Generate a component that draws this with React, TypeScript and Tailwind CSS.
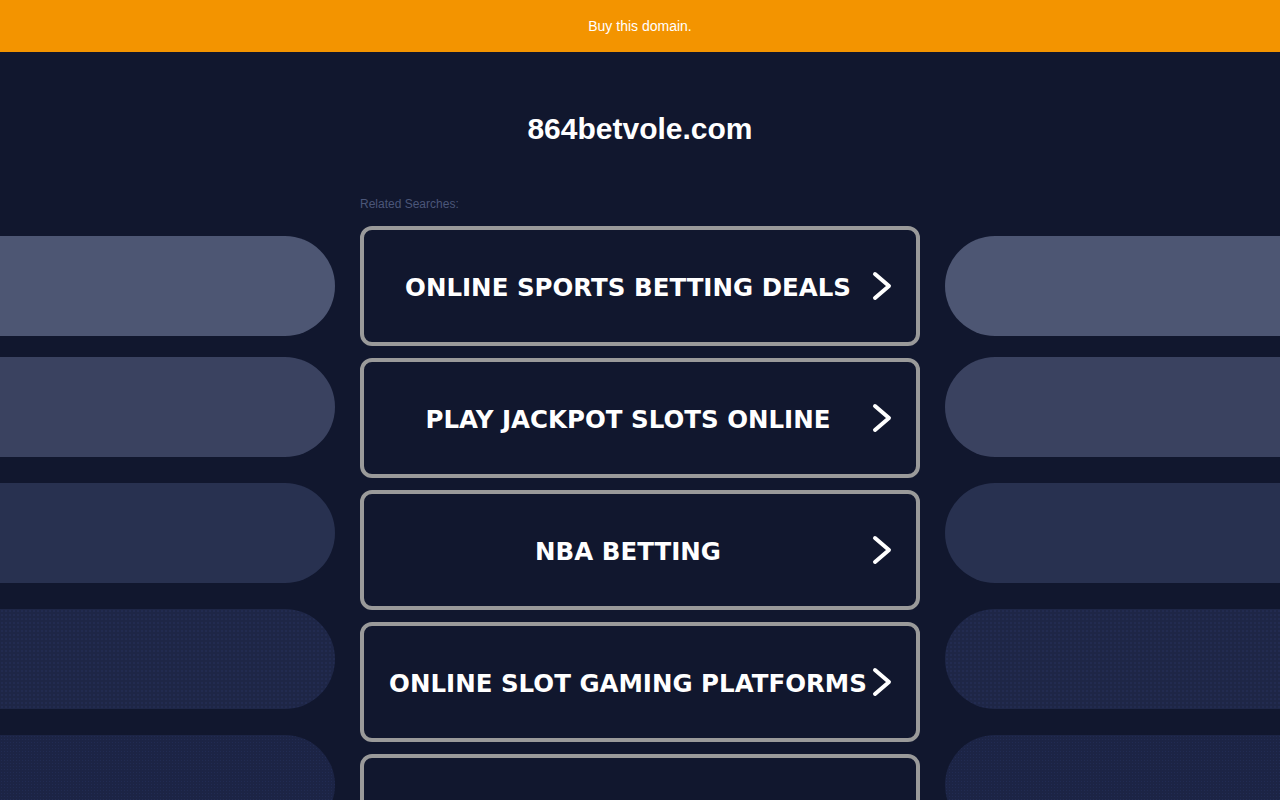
const searches = [
  "ONLINE SPORTS BETTING DEALS",
  "PLAY JACKPOT SLOTS ONLINE",
  "NBA BETTING",
  "ONLINE SLOT GAMING PLATFORMS",
  "",
];

// decorative side pills: colour + top margin
const pills = [
  { mt: "mt-0", cls: "bg-[#4d5673]" },
  { mt: "mt-[21px]", cls: "bg-[#3a4260]" },
  { mt: "mt-[26px]", cls: "bg-[#283150]" },
  { mt: "mt-[26px]", cls: "bg-[#1e2646] bg-[radial-gradient(#222b50_1px,transparent_1px)] bg-[size:4px_4px]" },
  { mt: "mt-[26px]", cls: "bg-[#1c2445] bg-[radial-gradient(#212b52_1px,transparent_1px)] bg-[size:3px_3px]" },
];

function Chevron() {
  return (
    <svg
      width="22"
      height="30"
      viewBox="0 0 22 30"
      fill="none"
      stroke="white"
      strokeWidth="4"
      strokeLinecap="round"
      strokeLinejoin="round"
    >
      <path d="M4 3 L18 15 L4 27" />
    </svg>
  );
}

function SidePills({ side }: { side: "left" | "right" }) {
  return (
    <div className="flex flex-col pt-[184px]">
      {pills.map((p, i) => (
        <div
          key={i}
          className={`${p.mt} h-[100px] ${p.cls} ${
            side === "left" ? "rounded-r-[50px]" : "rounded-l-[50px]"
          }`}
        />
      ))}
    </div>
  );
}

export default function App() {
  return (
    <div
      className="h-[800px] overflow-hidden bg-[#11172e]"
      style={{ fontFamily: "'Liberation Sans', Arial, sans-serif" }}
    >
      {/* top banner */}
      <div className="h-[52px] bg-[#f39400] flex items-center justify-center">
        <span className="text-[14px] text-white">Buy this domain.</span>
      </div>

      <div className="grid grid-cols-[335px_560px_335px] gap-x-[25px]">
        <SidePills side="left" />

        <div className="flex flex-col pt-[60px]">
          <h1 className="text-center text-[30px] leading-[34px] font-bold text-white">
            864betvole.com
          </h1>
          <p className="mt-[50px] text-[12px] leading-[16px] text-[#4b5679]">
            Related Searches:
          </p>

          <div className="mt-[14px] flex flex-col gap-[12px]">
            {searches.map((s, i) => (
              <a
                key={i}
                href="#"
                className="relative flex h-[120px] items-center rounded-[12px] border-[4px] border-[#9a9a9a] bg-[#11172e]"
              >
                <span
                  className="flex-1 pr-[24px] pt-[4px] text-center text-[24.5px] font-bold text-white"
                  style={{ fontFamily: "'DejaVu Sans', Verdana, sans-serif" }}
                >
                  {s}
                </span>
                <span className="absolute right-[23px] top-1/2 -translate-y-1/2 flex">
                  <Chevron />
                </span>
              </a>
            ))}
          </div>
        </div>

        <SidePills side="right" />
      </div>
    </div>
  );
}
